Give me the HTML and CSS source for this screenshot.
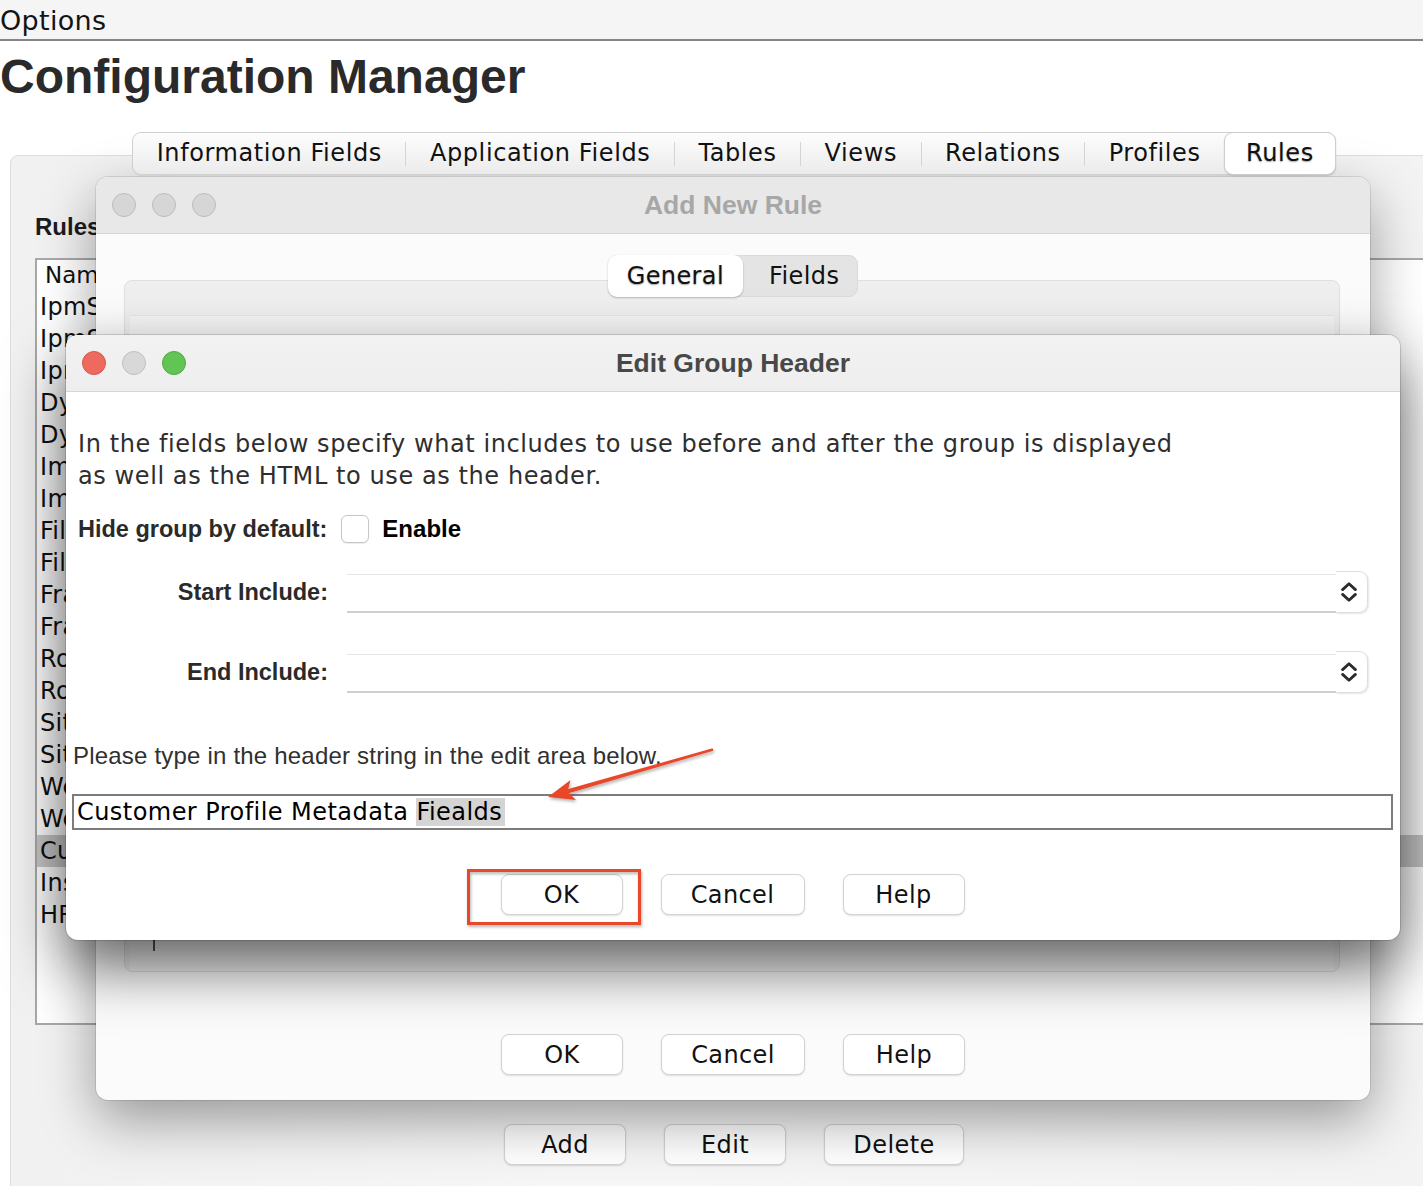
FILE: index.html
```html
<!DOCTYPE html>
<html lang="en">
<head>
<meta charset="utf-8">
<title>Configuration Manager</title>
<link rel="stylesheet" href="styles.css">
</head>
<body>
<div class="menubar">Options</div>
<h1 class="title">Configuration Manager</h1>

<div class="frame">
  <div class="tabs">
    <div class="tabbar">
      <div class="tab">Information Fields</div>
      <span class="sep"></span>
      <div class="tab">Application Fields</div>
      <span class="sep"></span>
      <div class="tab">Tables</div>
      <span class="sep"></span>
      <div class="tab">Views</div>
      <span class="sep"></span>
      <div class="tab">Relations</div>
      <span class="sep"></span>
      <div class="tab">Profiles</div>
      <div class="tab sel">Rules</div>
    </div>
  </div>
  <div class="panel">
    <div class="rules-label">Rules</div>
    <div class="table">
      <div class="th">Name</div>
      <div class="row">IpmSearchRule</div>
      <div class="row">IpmSecurity</div>
      <div class="row">IpmProfile</div>
      <div class="row">DynamicFields</div>
      <div class="row">DynamicViews</div>
      <div class="row">ImageUpload</div>
      <div class="row">ImportRules</div>
      <div class="row">FileTypes</div>
      <div class="row">FileStorage</div>
      <div class="row">FrameSettings</div>
      <div class="row">FrameLayout</div>
      <div class="row">RoleAccess</div>
      <div class="row">RoleMapping</div>
      <div class="row">SiteHeader</div>
      <div class="row">SiteFooter</div>
      <div class="row">WebForms</div>
      <div class="row">WebLinks</div>
      <div class="row sel">CustomerProfile</div>
      <div class="row">InsuranceData</div>
      <div class="row">HRRecords</div>
    </div>
    <div class="btnrow bottom-row">
      <div class="btn w122">Add</div>
      <div class="btn w122">Edit</div>
      <div class="btn w140">Delete</div>
    </div>
  </div>
</div>

<div class="dlg dlg-rule">
  <div class="titlebar inactive">
    <div class="lights">
      <span class="light gray"></span><span class="light gray"></span><span class="light gray"></span>
    </div>
    <div class="dlg-title">Add New Rule</div>
    <div></div>
  </div>
  <div class="rule-body">
    <div class="seg">
      <div class="seg-item sel">General</div>
      <div class="seg-item fields">Fields</div>
    </div>
    <div class="rule-panel">
      <div class="rule-inner"><div class="caret"></div></div>
    </div>
    <div class="btnrow rule-btns">
      <div class="btn w122">OK</div>
      <div class="btn w144">Cancel</div>
      <div class="btn w122">Help</div>
    </div>
  </div>
</div>

<div class="dlg dlg-edit">
  <div class="titlebar active">
    <div class="lights">
      <span class="light red"></span><span class="light mid"></span><span class="light green"></span>
    </div>
    <div class="dlg-title">Edit Group Header</div>
    <div></div>
  </div>
  <div class="edit-body">
    <p class="intro">In the fields below specify what includes to use before and after the group is displayed<br>as well as the HTML to use as the header.</p>
    <div class="hide-row">
      <span class="lbl">Hide group by default:</span>
      <span class="checkbox"></span>
      <span class="enable">Enable</span>
    </div>
    <div class="inc-row">
      <span class="lbl">Start Include:</span>
      <div class="combo">
        <div class="combo-field"></div>
        <div class="combo-btn"><svg width="16" height="22" viewBox="0 0 16 22"><path d="M1.6 8.6 L8 2.8 L14.4 8.6 M1.6 13.4 L8 19.2 L14.4 13.4" fill="none" stroke="#2b2b2b" stroke-width="2.8" stroke-linecap="round" stroke-linejoin="round"/></svg></div>
      </div>
    </div>
    <div class="inc-row second">
      <span class="lbl">End Include:</span>
      <div class="combo">
        <div class="combo-field"></div>
        <div class="combo-btn"><svg width="16" height="22" viewBox="0 0 16 22"><path d="M1.6 8.6 L8 2.8 L14.4 8.6 M1.6 13.4 L8 19.2 L14.4 13.4" fill="none" stroke="#2b2b2b" stroke-width="2.8" stroke-linecap="round" stroke-linejoin="round"/></svg></div>
      </div>
    </div>
    <div class="hint">Please type in the header string in the edit area below.</div>
    <div class="field">Customer Profile Metadata <span class="hl">Fiealds</span></div>
    <div class="btnrow edit-btns">
      <div class="btn w122">OK</div>
      <div class="btn w144">Cancel</div>
      <div class="btn w122">Help</div>
    </div>
  </div>
</div>

<svg class="annot" width="1423" height="1186" viewBox="0 0 1423 1186">
  <defs>
    <filter id="sh" x="-10%" y="-10%" width="130%" height="140%">
      <feDropShadow dx="1" dy="2" stdDeviation="1.5" flood-color="#000" flood-opacity="0.3"/>
    </filter>
  </defs>
  <g filter="url(#sh)" fill="#e9472c">
    <rect x="468.5" y="870.5" width="171" height="53" fill="none" stroke="#e9472c" stroke-width="3"/>
    <polygon points="713.4,750.8 712.6,748.2 566.6,789.6 567.8,793.4"/>
    <polygon points="548,797 576,800 567.5,791.5 570.5,780"/>
  </g>
</svg>
</body>
</html>
```
FILE: styles.css
```css
html, body {
  margin: 0;
  padding: 0;
}
body {
  width: 1423px;
  height: 1186px;
  overflow: hidden;
  position: relative;
  background: #ffffff;
  font-family: "DejaVu Sans", "Noto Sans", sans-serif;
  color: #111;
}

/* top */
.menubar {
  height: 38px;
  padding-top: 1px;
  background: #f5f5f5;
  border-bottom: 2px solid #858585;
  font-size: 27px;
  line-height: 39px;
  letter-spacing: 0.3px;
  color: #141414;
}
.title {
  margin: 8px 0 0 0;
  font-family: "Liberation Sans", Arial, sans-serif;
  font-weight: bold;
  font-size: 48px;
  line-height: 56px;
  color: #2a2a2a;
}

/* main window */
.frame {
  margin: 27px 0 0 10px;
  width: 1448px;
}
.tabs {
  display: flex;
  justify-content: center;
  position: relative;
  z-index: 1;
  margin-bottom: -20px;
}
.tabbar {
  display: flex;
  align-items: center;
  height: 41px;
  border: 1px solid #d0d0d0;
  border-radius: 9px;
  background: linear-gradient(#fdfdfd, #ebebeb);
  box-shadow: 0 1px 1px rgba(0, 0, 0, 0.06);
}
.tab {
  padding: 0 23.5px;
  font-size: 24px;
  line-height: 41px;
  letter-spacing: 0.6px;
  color: #111;
}
.tab.sel {
  height: 41px;
  margin: 0 -1px 0 0;
  padding: 0 21px;
  background: #fff;
  border: 1px solid #cdcdcd;
  border-radius: 9px;
  box-shadow: 0 1px 2px rgba(0, 0, 0, 0.12);
  text-shadow: 0 1px 1.5px rgba(0, 0, 0, 0.35);
}
.sep {
  width: 1px;
  height: 24px;
  background: #d4d4d4;
}
.panel {
  box-sizing: border-box;
  height: 1060px;
  padding-top: 57px;
  border: 1px solid #dddddd;
  border-radius: 8px;
  background: linear-gradient(90deg, #f1f1f1, #f6f6f6 40%, #f3f3f3);
}
.rules-label {
  margin-left: 24px;
  font-family: "Liberation Sans", Arial, sans-serif;
  font-weight: bold;
  font-size: 24px;
  line-height: 28px;
  color: #1c1c1c;
}
.table {
  box-sizing: border-box;
  height: 767px;
  margin: 17px 24px 0 24px;
  border: 2px solid #a8a8a8;
  background: #fff;
}
.th {
  height: 31px;
  padding-left: 8px;
  font-size: 23px;
  line-height: 31px;
  color: #111;
}
.row {
  height: 32px;
  padding-left: 3px;
  font-size: 24px;
  line-height: 32px;
  letter-spacing: 0.3px;
  color: #111;
  white-space: nowrap;
}
.row.sel {
  background: #c8c8c8;
}

/* buttons */
.btnrow {
  display: flex;
  justify-content: center;
  gap: 38px;
}
.bottom-row {
  margin-top: 99px;
}
.btn {
  box-sizing: border-box;
  height: 41px;
  display: flex;
  align-items: center;
  justify-content: center;
  background: #fff;
  border: 1px solid #d3d3d3;
  border-radius: 8px;
  box-shadow: 0 1px 2px rgba(0, 0, 0, 0.13);
  font-size: 24px;
  letter-spacing: 0.4px;
  color: #111;
}
.w122 { width: 122px; }
.w140 { width: 140px; }
.w144 { width: 144px; }

/* dialogs */
.dlg {
  position: absolute;
  box-sizing: border-box;
  border-radius: 12px;
  overflow: hidden;
}
.dlg-rule {
  left: 96px;
  top: 177px;
  width: 1274px;
  height: 923px;
  background: #fbfbfb;
  box-shadow: 0 20px 55px rgba(0, 0, 0, 0.38), 0 0 0 1px rgba(0, 0, 0, 0.1);
}
.dlg-edit {
  left: 66px;
  top: 335px;
  width: 1334px;
  height: 605px;
  background: #fff;
  box-shadow: 0 26px 60px rgba(0, 0, 0, 0.62), 0 0 0 1px rgba(0, 0, 0, 0.14);
  z-index: 2;
}
.titlebar {
  height: 56px;
  display: grid;
  grid-template-columns: 1fr auto 1fr;
  align-items: center;
  border-bottom: 1px solid #d6d6d6;
}
.titlebar.inactive {
  background: #e8e8e8;
}
.titlebar.active {
  background: linear-gradient(#f2f2f2, #eeeeee);
}
.lights {
  display: flex;
  gap: 16px;
  padding-left: 16px;
}
.light {
  box-sizing: border-box;
  width: 24px;
  height: 24px;
  border-radius: 50%;
}
.light.gray {
  background: #d6d6d6;
  border: 1px solid #bcbcbc;
}
.light.red {
  background: #ee6a5f;
  border: 1px solid #d4564c;
}
.light.mid {
  background: #d8d8d8;
  border: 1px solid #c0c0c0;
}
.light.green {
  background: #61c454;
  border: 1px solid #4eab41;
}
.dlg-title {
  font-family: "Liberation Sans", Arial, sans-serif;
  font-weight: bold;
  font-size: 26.5px;
  line-height: 30px;
}
.inactive .dlg-title { color: #a7a7a7; }
.active .dlg-title { color: #484848; }

/* add new rule body */
.rule-body {
  display: flex;
  flex-direction: column;
  align-items: center;
}
.seg {
  position: relative;
  z-index: 1;
  box-sizing: border-box;
  display: flex;
  height: 42px;
  margin-top: 21px;
  border: 1px solid #dadada;
  border-radius: 9px;
  background: #e4e4e4;
}
.seg-item {
  font-size: 24px;
  line-height: 40px;
  letter-spacing: 0.4px;
  color: #111;
}
.seg-item.sel {
  padding: 0 19px;
  margin: -1px 0 -1px -1px;
  line-height: 42px;
  background: #fff;
  border-radius: 9px;
  box-shadow: 0 1px 2px rgba(0, 0, 0, 0.25);
  text-shadow: 0 1px 1.5px rgba(0, 0, 0, 0.35);
}
.seg-item.fields {
  padding: 0 18px 0 26px;
}
.rule-panel {
  align-self: stretch;
  box-sizing: border-box;
  height: 692px;
  margin: -17px 30px 0 28px;
  padding: 34px 5px 0 5px;
  display: flex;
  flex-direction: column;
  border: 1px solid #e0e0e0;
  border-radius: 8px;
  background: #efefef;
}
.rule-inner {
  flex: 1;
  display: flex;
  flex-direction: column;
  justify-content: flex-end;
  background: #f5f5f5;
  border-top: 1px solid #e6e6e6;
}
.caret {
  width: 2px;
  height: 11px;
  margin: 0 0 20px 23px;
  background: #555;
}
.rule-btns {
  margin-top: 62px;
}

/* edit group header body */
.edit-body {
  padding: 36px 7px 0 12px;
}
.intro {
  margin: 0;
  font-size: 24px;
  line-height: 32px;
  letter-spacing: 0.58px;
  color: #2e2e2e;
}
.lbl {
  font-family: "Liberation Sans", Arial, sans-serif;
  font-weight: bold;
  font-size: 23.5px;
  color: #2a2a2a;
  white-space: nowrap;
}
.hide-row {
  display: flex;
  align-items: center;
  height: 28px;
  margin-top: 23px;
}
.hide-row .lbl {
  margin-right: 14px;
}
.checkbox {
  box-sizing: border-box;
  width: 28px;
  height: 28px;
  margin-right: 13px;
  background: #fff;
  border: 1px solid #c6c6c6;
  border-radius: 6px;
  box-shadow: 0 1px 1px rgba(0, 0, 0, 0.08);
}
.enable {
  font-family: "Liberation Sans", Arial, sans-serif;
  font-weight: bold;
  font-size: 24px;
  color: #000;
}
.inc-row {
  display: flex;
  align-items: center;
  height: 45px;
  margin-top: 28px;
}
.inc-row.second {
  margin-top: 35px;
}
.inc-row .lbl {
  width: 250px;
  margin-right: 19px;
  margin-top: -3px;
  text-align: right;
}
.combo {
  flex: 1;
  display: flex;
  align-items: center;
  margin-right: 25px;
}
.combo-field {
  flex: 1;
  box-sizing: border-box;
  height: 39px;
  background: #fff;
  border-top: 1px solid #e4e4e4;
  border-bottom: 2px solid #cfcfcf;
}
.combo-btn {
  box-sizing: border-box;
  width: 32px;
  height: 42px;
  margin-top: -3px;
  display: flex;
  align-items: center;
  justify-content: center;
  padding-right: 6px;
  background: #fff;
  border: 1px solid #dedede;
  border-left: none;
  border-radius: 0 9px 9px 0;
  box-shadow: 1px 1px 2px rgba(0, 0, 0, 0.1);
}
.hint {
  margin: 46px 0 0 -5px;
  font-family: "Liberation Sans", Arial, sans-serif;
  font-size: 24px;
  line-height: 28px;
  letter-spacing: 0.2px;
  color: #303030;
}
.field {
  box-sizing: border-box;
  height: 36px;
  margin: 24px 0 0 -6px;
  padding-left: 3px;
  border: 2px solid #7c7c7c;
  font-size: 24px;
  line-height: 32px;
  letter-spacing: 0.45px;
  color: #000;
  white-space: nowrap;
}
.hl {
  background: #d4d4d4;
  padding-right: 3px;
}
.edit-btns {
  margin: 44px 0 0 -6px;
}

/* annotations */
.annot {
  position: absolute;
  left: 0;
  top: 0;
  z-index: 10;
  pointer-events: none;
}
```
